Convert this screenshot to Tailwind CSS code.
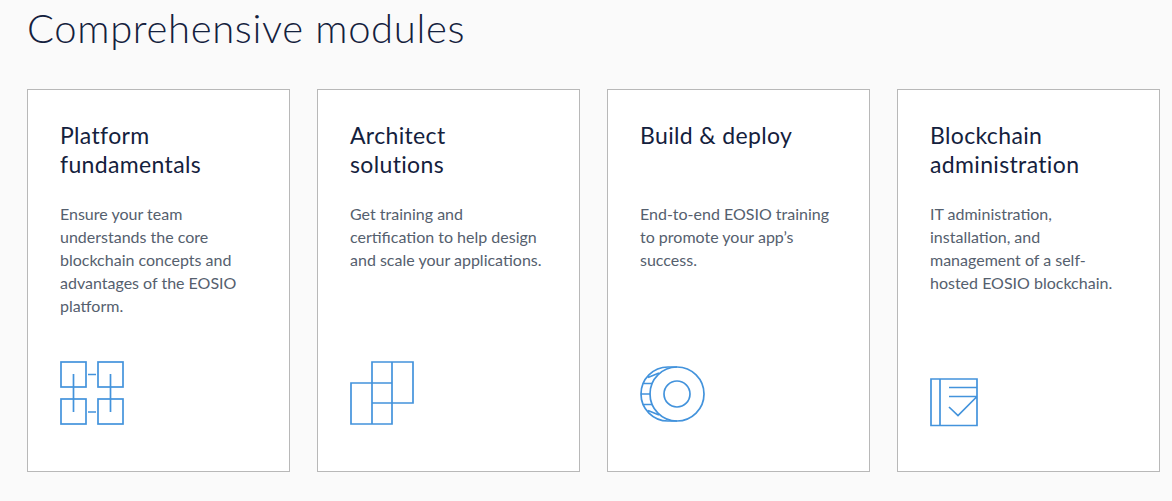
<!DOCTYPE html>
<html lang="en">
<head>
  <meta charset="UTF-8">
  <title>Comprehensive modules</title>
  <script src="https://cdn.jsdelivr.net/npm/@tailwindcss/browser@4"></script>
</head>
<body class="h-[501px] overflow-hidden bg-[#fafafa] font-['Lato',sans-serif]">
  <div class="px-[27px]">
    <h1 class="h-[89px] pt-[4px] text-[40px] leading-[48px] font-light tracking-[0.65px] text-[#14213d]">Comprehensive modules</h1>

    <div class="grid grid-cols-4 gap-[27px] w-[1133px]">
      <div class="h-[383px] flex flex-col bg-white border border-[#b8b8b8] px-[32px] pt-[31px]">
        <h2 class="h-[58px] text-[23px] leading-[29px] tracking-[0.35px] text-[#14213d]">Platform<br>fundamentals</h2>
        <p class="mt-[23px] h-[115px] text-[16px] leading-[23px] text-[#55606e]">Ensure your team<br>understands the core<br>blockchain concepts and<br>advantages of the EOSIO<br>platform.</p>
        <svg class="mt-[44px]" width="66" height="66" viewBox="0 0 66 66" fill="none" stroke="#4393dc" stroke-width="1.7">
          <rect x="1" y="1" width="25" height="25"/>
          <rect x="38" y="1" width="25" height="25"/>
          <rect x="1" y="38" width="25" height="25"/>
          <rect x="38" y="38" width="25" height="25"/>
          <path d="M13.500 13v38M50.500 13v38M28 13.500h8M28 51h8"/>
        </svg>
      </div>

      <div class="h-[383px] flex flex-col bg-white border border-[#b8b8b8] px-[32px] pt-[31px]">
        <h2 class="h-[58px] text-[23px] leading-[29px] tracking-[0.35px] text-[#14213d]">Architect<br>solutions</h2>
        <p class="mt-[23px] h-[115px] text-[16px] leading-[23px] text-[#55606e]">Get training and<br>certification to help design<br>and scale your applications.</p>
        <svg class="mt-[44px]" width="66" height="66" viewBox="0 0 66 66" fill="none" stroke="#4393dc" stroke-width="1.7">
          <path d="M22 1h41v41H22zM1 22h41v41H1zM22 42v21M42 1v21"/>
        </svg>
      </div>

      <div class="h-[383px] flex flex-col bg-white border border-[#b8b8b8] px-[32px] pt-[31px]">
        <h2 class="h-[58px] text-[23px] leading-[29px] tracking-[0.35px] text-[#14213d]">Build &amp; deploy</h2>
        <p class="mt-[23px] h-[115px] text-[16px] leading-[23px] text-[#55606e]">End-to-end EOSIO training<br>to promote your app’s<br>success.</p>
        <svg class="mt-[44px]" width="66" height="66" viewBox="0 0 66 66" fill="none" stroke="#4393dc" stroke-width="1.7">
          <circle cx="37" cy="33" r="27"/>
          <circle cx="37" cy="33" r="13"/>
          <path d="M37 6H28A27 27 0 0 0 28 60H37M1 33h9.500M3.500 22.500h9M3.500 43.500h9M8 16.500l11-4.500M8 49.500l11 4.500"/>
        </svg>
      </div>

      <div class="h-[383px] flex flex-col bg-white border border-[#b8b8b8] px-[32px] pt-[31px]">
        <h2 class="h-[58px] text-[23px] leading-[29px] tracking-[0.35px] text-[#14213d]">Blockchain<br>administration</h2>
        <p class="mt-[23px] h-[115px] text-[16px] leading-[23px] text-[#55606e]">IT administration,<br>installation, and<br>management of a self-<br>hosted EOSIO blockchain.</p>
        <svg class="mt-[44px]" width="66" height="66" viewBox="0 0 66 66" fill="none" stroke="#4393dc" stroke-width="1.7">
          <path d="M1 18h46v46.500H1zM10 18v46.500M19 26.500h28M19 35.500h28M19 46l9 8.500 19-19"/>
        </svg>
      </div>
    </div>
  </div>
</body>
</html>
